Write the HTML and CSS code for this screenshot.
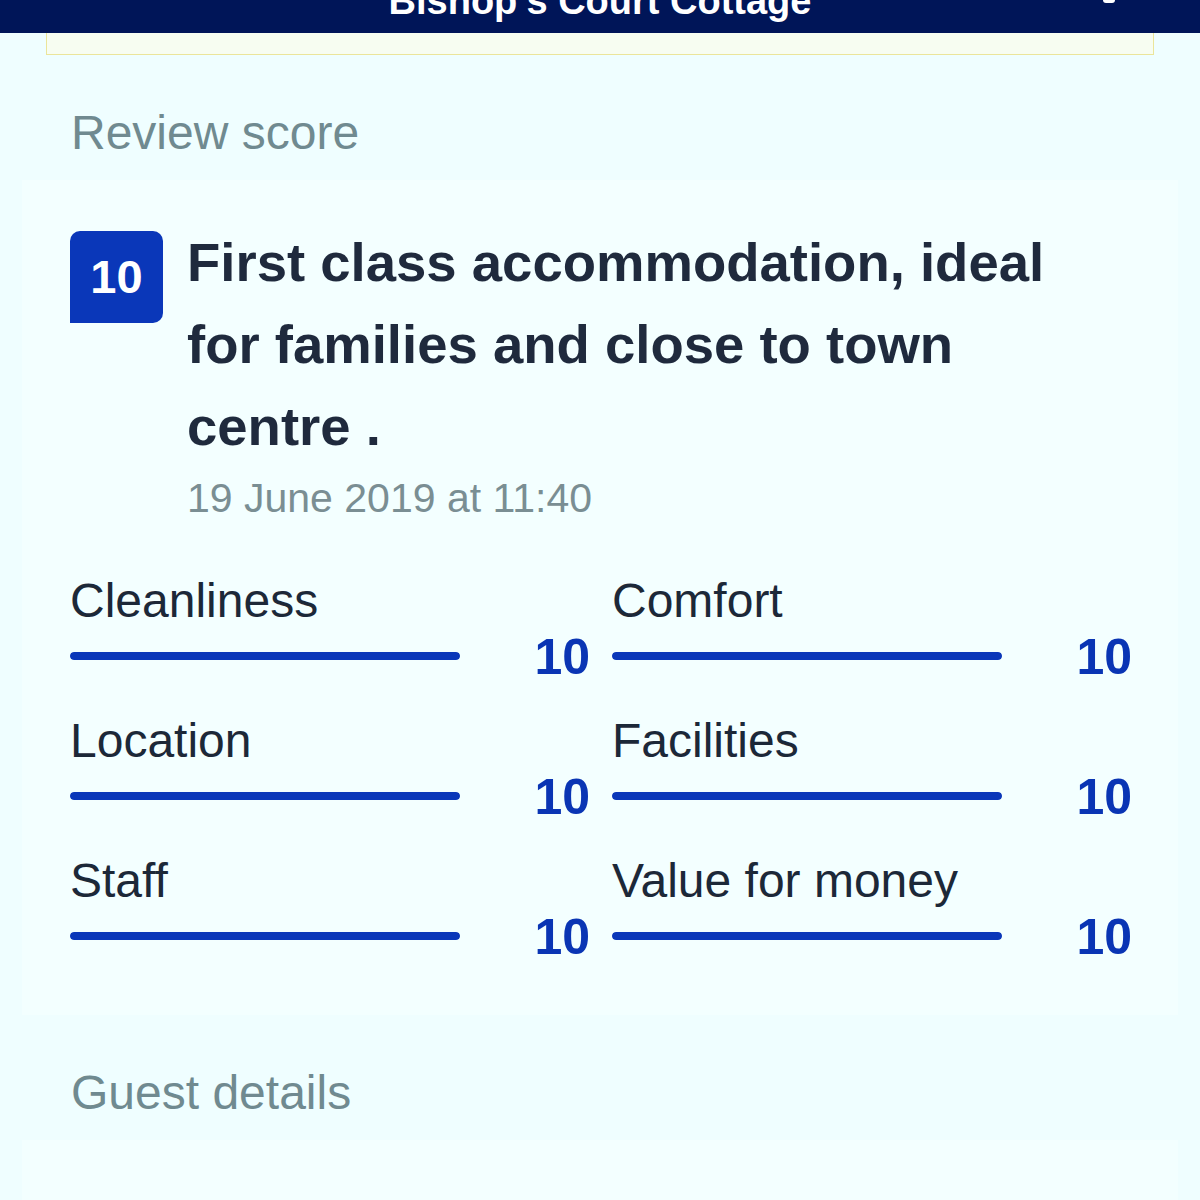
FILE: index.html
```html
<!DOCTYPE html>
<html lang="en">
<head>
  <meta charset="UTF-8" />
  <meta name="viewport" content="width=device-width, initial-scale=1.0"/>
  <title>Bishop's Court Cottage</title>
  <link rel="stylesheet" href="styles.css">
</head>
<body>

  <!-- Top bar -->
  <header class="topbar">
    <h1 class="topbar-title">Bishop’s Court Cottage</h1>
    <span class="topbar-icon"></span>
  </header>

  <div class="notice"></div>

  <!-- Review score -->
  <h2 class="section-title">Review score</h2>
  <div class="card">
    <div class="review-head">
      <div class="badge">10</div>
      <div class="review-text">
        <p class="review-title">First class accommodation, ideal for families and close to town centre .</p>
        <p class="review-date">19 June 2019 at 11:40</p>
      </div>
    </div>

    <div class="scores">
      <div class="score-item">
        <div class="score-label">Cleanliness</div>
        <div class="score-row"><div class="bar"><div class="bar-fill" style="width: 100%"></div></div><span class="score-value">10</span></div>
      </div>
      <div class="score-item">
        <div class="score-label">Comfort</div>
        <div class="score-row"><div class="bar"><div class="bar-fill" style="width: 100%"></div></div><span class="score-value">10</span></div>
      </div>
      <div class="score-item">
        <div class="score-label">Location</div>
        <div class="score-row"><div class="bar"><div class="bar-fill" style="width: 100%"></div></div><span class="score-value">10</span></div>
      </div>
      <div class="score-item">
        <div class="score-label">Facilities</div>
        <div class="score-row"><div class="bar"><div class="bar-fill" style="width: 100%"></div></div><span class="score-value">10</span></div>
      </div>
      <div class="score-item">
        <div class="score-label">Staff</div>
        <div class="score-row"><div class="bar"><div class="bar-fill" style="width: 100%"></div></div><span class="score-value">10</span></div>
      </div>
      <div class="score-item">
        <div class="score-label">Value for money</div>
        <div class="score-row"><div class="bar"><div class="bar-fill" style="width: 100%"></div></div><span class="score-value">10</span></div>
      </div>
    </div>
  </div>

  <!-- Guest details -->
  <h2 class="section-title">Guest details</h2>
  <div class="card card-empty"></div>

</body>
</html>
```

FILE: styles.css
```css
body {
  margin: 0;
  font-family: "Liberation Sans", Arial, sans-serif;
  background: #effeff;
  color: #1e2a3b;
}
.topbar {
  position: relative;
  height: 33px;
  overflow: hidden;
  background: #001558;
  text-align: center;
}
.topbar-title {
  margin: -18px 0 0;
  font-size: 38px;
  line-height: 38px;
  font-weight: bold;
  color: #fff;
}
.topbar-icon {
  position: absolute;
  top: -6px;
  left: 1103px;
  width: 12px;
  height: 9px;
  border-radius: 3px;
  background: #fff;
}
.notice {
  height: 21px;
  margin: 0 46px;
  border: 1px solid #ebe59a;
  border-top: none;
  background: #f7fdf1;
}
.section-title {
  margin: 50px 0 19px 71px;
  font-size: 48px;
  line-height: 56px;
  font-weight: normal;
  color: #708a90;
}
.card {
  margin: 0 22px;
  padding: 51px 48px 50px;
  background: #f3ffff;
}
.card-empty {
  height: 40px;
}
.review-head {
  display: flex;
  align-items: flex-start;
  gap: 24px;
}
.badge {
  flex: none;
  width: 93px;
  height: 92px;
  border-radius: 10px 10px 10px 0;
  background: #0a37b9;
  color: #fff;
  font-size: 47px;
  font-weight: bold;
  line-height: 92px;
  text-align: center;
}
.review-text {
  max-width: 910px;
}
.review-title {
  margin: -9px 0 0;
  font-size: 54.5px;
  line-height: 82px;
  font-weight: bold;
  color: #1f2a3d;
}
.review-date {
  margin: 2px 0 0;
  font-size: 41px;
  line-height: 56px;
  color: #7a8e93;
}
.scores {
  display: grid;
  grid-template-columns: 520px 520px;
  column-gap: 22px;
  row-gap: 28px;
  margin-top: 47px;
}
.score-label {
  font-size: 48px;
  line-height: 56px;
  color: #1c2838;
}
.score-row {
  display: flex;
  align-items: center;
  height: 56px;
}
.bar {
  width: 390px;
  height: 8px;
  margin-bottom: 2px;
  border-radius: 4px;
  background: #c9d7ee;
  overflow: hidden;
}
.bar-fill {
  height: 100%;
  border-radius: 4px;
  background: #0a37b9;
}
.score-value {
  flex: 1;
  text-align: right;
  font-size: 50px;
  font-weight: bold;
  color: #0a35b4;
}
```
